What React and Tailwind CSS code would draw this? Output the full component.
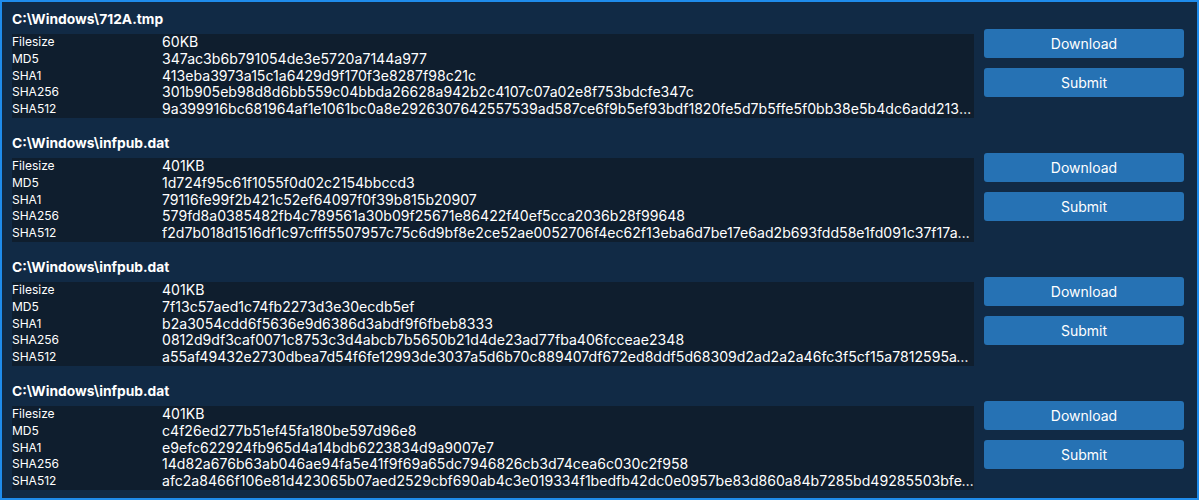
import React from "react";

const files = [
  {
    name: "C:\\Windows\\712A.tmp",
    filesize: "60KB",
    md5: "347ac3b6b791054de3e5720a7144a977",
    sha1: "413eba3973a15c1a6429d9f170f3e8287f98c21c",
    sha256: "301b905eb98d8d6bb559c04bbda26628a942b2c4107c07a02e8f753bdcfe347c",
    sha512:
      "9a399916bc681964af1e1061bc0a8e2926307642557539ad587ce6f9b5ef93bdf1820fe5d7b5ffe5f0bb38e5b4dc6add213a4c7b0e9d1f2a3b4c5d6e7f8a9b0",
  },
  {
    name: "C:\\Windows\\infpub.dat",
    filesize: "401KB",
    md5: "1d724f95c61f1055f0d02c2154bbccd3",
    sha1: "79116fe99f2b421c52ef64097f0f39b815b20907",
    sha256: "579fd8a0385482fb4c789561a30b09f25671e86422f40ef5cca2036b28f99648",
    sha512:
      "f2d7b018d1516df1c97cfff5507957c75c6d9bf8e2ce52ae0052706f4ec62f13eba6d7be17e6ad2b693fdd58e1fd091c37f17a8b9c0d1e2f3a4b5c6d7e8f90",
  },
  {
    name: "C:\\Windows\\infpub.dat",
    filesize: "401KB",
    md5: "7f13c57aed1c74fb2273d3e30ecdb5ef",
    sha1: "b2a3054cdd6f5636e9d6386d3abdf9f6fbeb8333",
    sha256: "0812d9df3caf0071c8753c3d4abcb7b5650b21d4de23ad77fba406fcceae2348",
    sha512:
      "a55af49432e2730dbea7d54f6fe12993de3037a5d6b70c889407df672ed8ddf5d68309d2ad2a2a46fc3f5cf15a7812595a1b2c3d4e5f6a7b8c9d0e1f2a3b4",
  },
  {
    name: "C:\\Windows\\infpub.dat",
    filesize: "401KB",
    md5: "c4f26ed277b51ef45fa180be597d96e8",
    sha1: "e9efc622924fb965d4a14bdb6223834d9a9007e7",
    sha256: "14d82a676b63ab046ae94fa5e41f9f69a65dc7946826cb3d74cea6c030c2f958",
    sha512:
      "afc2a8466f106e81d423065b07aed2529cbf690ab4c3e019334f1bedfb42dc0e0957be83d860a84b7285bd49285503bfe1a2b3c4d5e6f7a8b9c0d1e2f3a4b5",
  },
];

const Row = ({ label, value }) => (
  <div className="flex h-[16.8px] leading-[16.8px]">
    <div className="w-[150px] shrink-0 text-[12px]">{label}</div>
    <div className="flex-1 min-w-0 truncate text-[14.1px]">{value}</div>
  </div>
);

const App = () => {
  return (
    <div
      className="w-[1199px] h-[500px] overflow-hidden border-2 border-[#1f8cec] bg-[#112a45] pl-[10px] pr-[13px] pt-[7px] text-white"
      style={{ fontFamily: "Inter, 'Noto Sans', sans-serif" }}
    >
      {files.map((f, i) => (
        <div key={i} className="mb-[15px]">
          <h3 className="h-[20px] leading-[20px] text-[13.8px] font-bold">
            {f.name}
          </h3>
          <div className="flex gap-[10px]">
            <div className="flex-1 min-w-0 mt-[5px] bg-[#0f1e2e]">
              <Row label="Filesize" value={f.filesize} />
              <Row label="MD5" value={f.md5} />
              <Row label="SHA1" value={f.sha1} />
              <Row label="SHA256" value={f.sha256} />
              <Row label="SHA512" value={f.sha512} />
            </div>
            <div className="w-[200px] shrink-0 flex flex-col gap-[10px]">
              <button className="h-[29px] rounded-[3px] bg-[#2672b4] text-[14px] text-white">
                Download
              </button>
              <button className="h-[29px] rounded-[3px] bg-[#2672b4] text-[14px] text-white">
                Submit
              </button>
            </div>
          </div>
        </div>
      ))}
    </div>
  );
};

export default App;
